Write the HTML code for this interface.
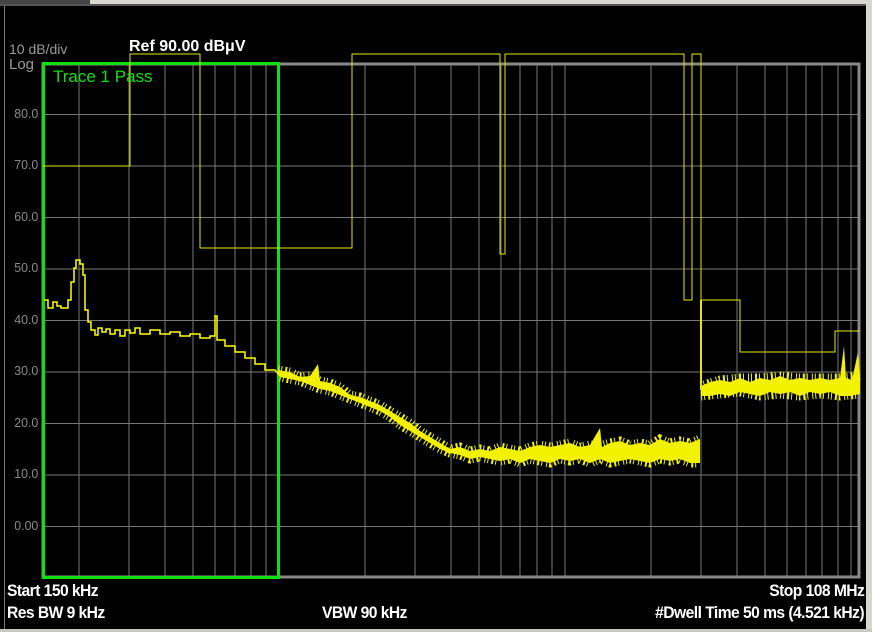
<!DOCTYPE html>
<html><head><meta charset="utf-8"><style>
html,body{margin:0;padding:0;background:#000;width:872px;height:632px;overflow:hidden;position:relative;font-family:"Liberation Sans",sans-serif}
.t{position:absolute;white-space:nowrap}
.y{position:absolute;right:834px;color:#8a8a8a;font-size:13px;transform:scaleX(0.95);transform-origin:right}
.b{color:#fff;font-weight:bold;font-size:17px;letter-spacing:-0.6px;transform:scaleX(0.92)}
</style></head><body>
<div style="position:absolute;left:0;top:0;width:872px;height:4px;background:#d8d8d0"></div>
<div style="position:absolute;left:0;top:0;width:90px;height:4px;background:#444"></div>
<div style="position:absolute;left:0;top:4px;width:872px;height:2px;background:#555"></div>
<div style="position:absolute;left:866px;top:0;width:6px;height:632px;background:#d8d8c8"></div>
<div style="position:absolute;left:0;top:629px;width:872px;height:3px;background:#c8c8c0"></div>
<div style="position:absolute;left:4px;top:6px;width:1px;height:623px;background:#777"></div>

<svg width="872" height="632" style="position:absolute;left:0;top:0">
<g stroke="#777" stroke-width="1" shape-rendering="crispEdges">
<line x1="43" x2="860" y1="114.5" y2="114.5"/><line x1="43" x2="860" y1="166" y2="166"/>
<line x1="43" x2="860" y1="217.5" y2="217.5"/><line x1="43" x2="860" y1="269" y2="269"/>
<line x1="43" x2="860" y1="320.5" y2="320.5"/><line x1="43" x2="860" y1="372" y2="372"/>
<line x1="43" x2="860" y1="423.5" y2="423.5"/><line x1="43" x2="860" y1="475" y2="475"/>
<line x1="43" x2="860" y1="526.5" y2="526.5"/>
<line x1="79" x2="79" y1="63" y2="578"/><line x1="129" x2="129" y1="63" y2="578"/>
<line x1="165" x2="165" y1="63" y2="578"/><line x1="193" x2="193" y1="63" y2="578"/>
<line x1="215" x2="215" y1="63" y2="578"/><line x1="235" x2="235" y1="63" y2="578"/>
<line x1="251" x2="251" y1="63" y2="578"/><line x1="266" x2="266" y1="63" y2="578"/>
<line x1="365" x2="365" y1="63" y2="578"/><line x1="415" x2="415" y1="63" y2="578"/>
<line x1="451" x2="451" y1="63" y2="578"/><line x1="479" x2="479" y1="63" y2="578"/>
<line x1="501" x2="501" y1="63" y2="578"/><line x1="520" x2="520" y1="63" y2="578"/>
<line x1="537" x2="537" y1="63" y2="578"/><line x1="552" x2="552" y1="63" y2="578"/>
<line x1="565" x2="565" y1="63" y2="578"/><line x1="651" x2="651" y1="63" y2="578"/>
<line x1="701" x2="701" y1="63" y2="578"/><line x1="737" x2="737" y1="63" y2="578"/>
<line x1="765" x2="765" y1="63" y2="578"/><line x1="787" x2="787" y1="63" y2="578"/>
<line x1="806" x2="806" y1="63" y2="578"/><line x1="822" x2="822" y1="63" y2="578"/>
<line x1="838" x2="838" y1="63" y2="578"/><line x1="851" x2="851" y1="63" y2="578"/>
</g>
<rect x="43" y="64" width="816" height="513" fill="none" stroke="#888" stroke-width="3"/>
<rect x="43.5" y="63.5" width="235" height="514" fill="none" stroke="#10e010" stroke-width="3"/>
<polyline fill="none" stroke="#e6e600" stroke-width="1" points="43,166 130,166 130,54 200,54 200,248 352,248 352,54 500,54 500,254 505,254 505,54 684,54 684,300 692,300 692,54 701,54 701,300 740,300 740,352 835,352 835,331 860,331"/>
<polyline fill="none" stroke="#ffff00" stroke-width="1.5" points="44,300 48,300 48,308 53,308 53,302 57,302 57,306 61,306 61,308 68,308 68,300 71,300 71,282 74,282 74,268 76,268 76,260 80,260 80,264 83,264 83,275 85,275 85,310 88,310 88,322 91,322 91,330 95,330 95,335 98,335 98,328 102,328 102,332 106,332 106,329 110,329 110,334 115,334 115,330 120,330 120,336 125,336 125,330 130,330 130,333 135,333 135,328 140,328 140,334 150,334 150,330 160,330 160,334 170,334 170,332 180,332 180,336 190,336 190,334 200,334 200,338 210,338 210,336 215,336 215,316 217,316 217,340 225,340 225,346 235,346 235,352 245,352 245,358 255,358 255,364 265,364 265,370 275,370 280,376"/>
<polygon fill="#f2f200" points="278,370 290,372 300,377 310,376 318,364 320,381 330,383 340,387 350,395 360,397 370,401 380,405 390,411 400,417 410,423 420,431 430,437 440,443 450,449 460,447 470,451 480,449 490,451 500,447 510,449 520,451 530,447 540,445 550,447 560,445 570,443 580,447 590,445 600,428 602,447 610,443 620,441 630,445 640,443 650,445 660,439 670,443 680,441 690,443 700,439 700,463 690,463 680,459 670,461 660,459 650,463 640,461 630,459 620,461 610,463 600,459 590,463 580,459 570,461 560,459 550,463 540,461 530,459 520,463 510,459 500,461 490,459 480,457 470,459 460,455 450,453 440,449 430,443 420,437 410,431 400,425 390,417 380,411 370,407 360,403 350,399 340,395 330,391 320,389 310,385 300,381 290,379 280,377"/>
<g fill="none" stroke="#f2f200" stroke-width="9" stroke-dasharray="1 2 1 3 2 2 1 4">
<polyline points="278,370 290,372 300,377 310,376 320,381 330,383 340,387 350,395 360,397 370,401 380,405 390,411 400,417 410,423 420,431 430,437 440,443 450,449 460,447 470,451 480,449 490,451 500,447 510,449 520,451 530,447 540,445 550,447 560,445 570,443 580,447 590,445 600,446 610,443 620,441 630,445 640,443 650,445 660,439 670,443 680,441 690,443 700,439"/>
<polyline points="280,377 290,379 300,381 310,385 320,389 330,391 340,395 350,399 360,403 370,407 380,411 390,417 400,425 410,431 420,437 430,443 440,449 450,453 460,455 470,459 480,457 490,459 500,461 510,459 520,463 530,459 540,461 550,463 560,459 570,461 580,459 590,463 600,459 610,463 620,461 630,459 640,461 650,463 660,459 670,461 680,459 690,463 700,463"/>
<polyline points="701,386 720,380 740,378 760,378 780,376 800,378 820,378 840,378 860,376"/>
<polyline points="701,396 720,394 740,392 760,396 780,394 800,396 820,394 840,396 860,394"/>
</g>
<polygon fill="#f2f200" points="701,386 710,382 720,380 730,382 740,378 750,382 760,378 770,380 780,376 790,380 800,378 810,380 820,378 830,380 840,378 844,346 846,378 852,380 858,352 860,376 860,394 850,396 840,396 830,392 820,394 810,392 800,396 790,392 780,394 770,392 760,396 750,394 740,392 730,396 720,394 710,396 701,396"/>
<line x1="701" y1="300" x2="701" y2="390" stroke="#e6e600" stroke-width="2"/>
</svg>

<div class="t" style="left:9px;top:41px;color:#9a9a9a;font-size:14px">10 dB/div</div>
<div class="t" style="left:9px;top:56px;color:#9a9a9a;font-size:15px">Log</div>
<div class="t" style="left:129px;top:38px;color:#fff;font-weight:bold;font-size:16px">Ref 90.00 dBμV</div>
<div class="t" style="left:53px;top:67px;color:#10e010;font-size:17px">Trace 1 Pass</div>
<div class="y" style="top:106px">80.0</div>
<div class="y" style="top:157px">70.0</div>
<div class="y" style="top:209px">60.0</div>
<div class="y" style="top:260px">50.0</div>
<div class="y" style="top:312px">40.0</div>
<div class="y" style="top:363px">30.0</div>
<div class="y" style="top:415px">20.0</div>
<div class="y" style="top:466px">10.0</div>
<div class="y" style="top:518px">0.00</div>
<div class="t b" style="left:7px;top:581px;transform-origin:left">Start 150 kHz</div>
<div class="t b" style="right:8px;top:581px;transform-origin:right">Stop 108 MHz</div>
<div class="t b" style="left:7px;top:603px;transform-origin:left">Res BW 9 kHz</div>
<div class="t b" style="left:322px;top:603px;transform-origin:left">VBW 90 kHz</div>
<div class="t b" style="right:8px;top:603px;transform-origin:right">#Dwell Time 50 ms (4.521 kHz)</div>
</body></html>
